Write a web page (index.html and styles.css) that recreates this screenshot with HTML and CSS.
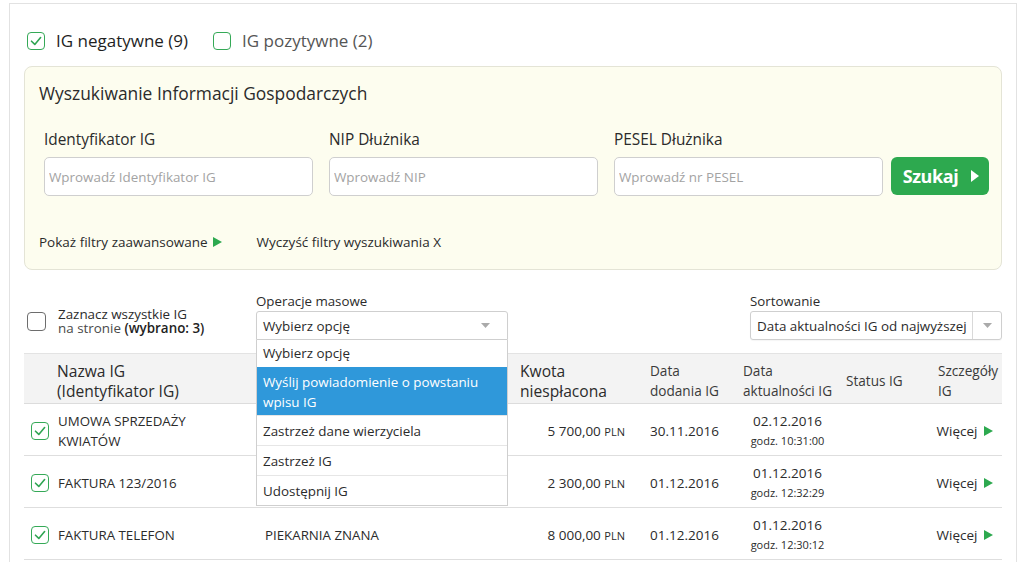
FILE: index.html
```html
<!DOCTYPE html>
<html lang="pl">
<head>
<meta charset="utf-8">
<title>Informacje Gospodarcze</title>
<link rel="stylesheet" href="styles.css">
</head>
<body>
<div class="page">
  <div class="type-filters">
    <label class="type-opt type-opt--active">
      <span class="cb cb--green"><svg viewBox="0 0 18 18" width="18" height="18"><polyline points="4.5,9.2 7.8,12.4 13.6,5.6" fill="none" stroke="#2fa552" stroke-width="1.6" stroke-linecap="round" stroke-linejoin="round"/></svg></span>
      IG negatywne (9)
    </label>
    <label class="type-opt">
      <span class="cb cb--green"></span>
      IG pozytywne (2)
    </label>
  </div>

  <section class="search-panel">
    <h2 class="panel-title">Wyszukiwanie Informacji Gospodarczych</h2>
    <div class="fields">
      <div class="field">
        <label class="field-label">Identyfikator IG</label>
        <input class="field-input" type="text" placeholder="Wprowadź Identyfikator IG">
      </div>
      <div class="field">
        <label class="field-label">NIP Dłużnika</label>
        <input class="field-input" type="text" placeholder="Wprowadź NIP">
      </div>
      <div class="field">
        <label class="field-label">PESEL Dłużnika</label>
        <input class="field-input" type="text" placeholder="Wprowadź nr PESEL">
      </div>
      <button class="btn-search" type="button">Szukaj <svg class="btn-tri" viewBox="0 0 8 12" width="8" height="12"><polygon points="0,0 8,6 0,12" fill="#fff"/></svg></button>
    </div>
    <div class="filter-links">
      <a class="filter-link">Pokaż filtry zaawansowane <svg class="tri" viewBox="0 0 9 10" width="9" height="10"><polygon points="0,0 9,5 0,10" fill="#2da94f"/></svg></a>
      <a class="filter-link">Wyczyść filtry wyszukiwania X</a>
    </div>
  </section>

  <div class="toolbar">
    <div class="select-all">
      <span class="cb cb--grey"></span>
      <div class="select-all-text"><div>Zaznacz wszystkie IG</div><div><span class="muted">na stronie</span> <b>(wybrano: 3)</b></div></div>
    </div>
    <div class="ops">
      <div class="tool-label">Operacje masowe</div>
      <div class="select select--open">
        <span class="select-value">Wybierz opcję</span>
        <span class="select-arrow select-arrow--wide"><svg viewBox="0 0 9 5" width="9" height="5"><polygon points="0,0 9,0 4.5,5" fill="#aaa"/></svg></span>
      </div>
      <ul class="dropdown">
        <li class="dropdown-item dropdown-item--first">Wybierz opcję</li>
        <li class="dropdown-item dropdown-item--hl">Wyślij powiadomienie o powstaniu wpisu IG</li>
        <li class="dropdown-item">Zastrzeż dane wierzyciela</li>
        <li class="dropdown-item">Zastrzeż IG</li>
        <li class="dropdown-item dropdown-item--last">Udostępnij IG</li>
      </ul>
    </div>
    <div class="sort">
      <div class="tool-label">Sortowanie</div>
      <div class="select">
        <span class="select-value">Data aktualności IG od najwyższej</span>
        <span class="select-arrow select-arrow--div"><svg viewBox="0 0 9 5" width="9" height="5"><polygon points="0,0 9,0 4.5,5" fill="#aaa"/></svg></span>
      </div>
    </div>
  </div>

  <table class="ig-table">
    <colgroup>
      <col class="c1"><col class="c2"><col class="c3"><col class="c4"><col class="c5"><col class="c6"><col class="c7">
    </colgroup>
    <thead>
      <tr>
        <th class="th-name th-big">Nazwa IG<br>(Identyfikator IG)</th>
        <th class="th-big"></th>
        <th class="th-big">Kwota<br>niespłacona</th>
        <th>Data<br>dodania IG</th>
        <th>Data<br>aktualności IG</th>
        <th>Status IG</th>
        <th>Szczegóły<br>IG</th>
      </tr>
    </thead>
    <tbody>
      <tr>
        <td class="td-name"><div class="name-wrap"><span class="cb cb--green"><svg viewBox="0 0 18 18" width="18" height="18"><polyline points="4.5,9.2 7.8,12.4 13.6,5.6" fill="none" stroke="#2fa552" stroke-width="1.6" stroke-linecap="round" stroke-linejoin="round"/></svg></span><span>UMOWA SPRZEDAŻY<br>KWIATÓW</span></div></td>
        <td class="td-cred"></td>
        <td class="td-amount">5 700,00 <small>PLN</small></td>
        <td class="td-date">30.11.2016</td>
        <td class="td-upd">02.12.2016<small>godz. 10:31:00</small></td>
        <td></td>
        <td class="td-more">Więcej <svg class="tri" viewBox="0 0 9 10" width="9" height="10"><polygon points="0,0 9,5 0,10" fill="#2da94f"/></svg></td>
      </tr>
      <tr>
        <td class="td-name"><div class="name-wrap"><span class="cb cb--green"><svg viewBox="0 0 18 18" width="18" height="18"><polyline points="4.5,9.2 7.8,12.4 13.6,5.6" fill="none" stroke="#2fa552" stroke-width="1.6" stroke-linecap="round" stroke-linejoin="round"/></svg></span><span>FAKTURA 123/2016</span></div></td>
        <td class="td-cred"></td>
        <td class="td-amount">2 300,00 <small>PLN</small></td>
        <td class="td-date">01.12.2016</td>
        <td class="td-upd">01.12.2016<small>godz. 12:32:29</small></td>
        <td></td>
        <td class="td-more">Więcej <svg class="tri" viewBox="0 0 9 10" width="9" height="10"><polygon points="0,0 9,5 0,10" fill="#2da94f"/></svg></td>
      </tr>
      <tr>
        <td class="td-name"><div class="name-wrap"><span class="cb cb--green"><svg viewBox="0 0 18 18" width="18" height="18"><polyline points="4.5,9.2 7.8,12.4 13.6,5.6" fill="none" stroke="#2fa552" stroke-width="1.6" stroke-linecap="round" stroke-linejoin="round"/></svg></span><span>FAKTURA TELEFON</span></div></td>
        <td class="td-cred">PIEKARNIA ZNANA</td>
        <td class="td-amount">8 000,00 <small>PLN</small></td>
        <td class="td-date">01.12.2016</td>
        <td class="td-upd">01.12.2016<small>godz. 12:30:12</small></td>
        <td></td>
        <td class="td-more">Więcej <svg class="tri" viewBox="0 0 9 10" width="9" height="10"><polygon points="0,0 9,5 0,10" fill="#2da94f"/></svg></td>
      </tr>
    </tbody>
  </table>
</div>
</body>
</html>
```

FILE: styles.css
```css
* { box-sizing: border-box; }
html, body { margin: 0; padding: 0; background: #fff; }
body {
  font-family: "Open Sans", "Liberation Sans", sans-serif;
  color: #2b2b2b;
  overflow: hidden;
}

.page {
  margin: 3px 0 0 9px;
  width: 1008px;
  border: 1px solid #e2e2e2;
  border-bottom: none;
  padding: 27px 14px 0 14px;
  min-height: 600px;
}

/* checkboxes */
.cb {
  display: inline-block;
  flex: none;
  width: 18px;
  height: 18px;
  border-radius: 4px;
  background: #fff;
}
.cb svg { display: block; }
.cb--green { border: 1.5px solid #35a957; }
.cb--green svg { margin: -1.5px; }
.cb--grey { border: 1.5px solid #6d6d6d; width: 19px; height: 19px; }

/* type filters */
.type-filters {
  display: flex;
  gap: 25px;
  height: 20px;
  align-items: center;
  padding-left: 3px;
}
.type-opt {
  display: flex;
  align-items: center;
  gap: 11px;
  font-size: 17px;
  line-height: 20px;
  color: #555;
}
.type-opt--active { color: #1f1f1f; }

/* search panel */
.search-panel {
  margin-top: 15px;
  background: #fdfdef;
  border: 1px solid #e4e4d6;
  border-radius: 8px;
  padding: 14px 12px 18px 14px;
}
.panel-title {
  margin: 0;
  font-size: 17.4px;
  line-height: 24px;
  font-weight: normal;
  color: #2b2b2b;
}
.fields {
  margin: 25px 0 0 5px;
  display: flex;
  align-items: flex-end;
  gap: 16px;
}
.field { flex: none; display: flex; flex-direction: column; width: 269px; }
.field-label {
  font-size: 15.4px;
  line-height: 20px;
  margin-bottom: 7px;
  color: #2b2b2b;
}
.field-input {
  height: 39px;
  width: 100%;
  border: 1px solid #cfcfcf;
  border-radius: 5px;
  background: #fff;
  padding: 0 4px;
  font-family: inherit;
  font-size: 13.4px;
  color: #333;
  outline: none;
}
.field-input::placeholder { color: #a3a3a3; }
.btn-search {
  flex: none;
  margin-left: -8px;
  margin-bottom: 1px;
  width: 98px;
  height: 38px;
  border: none;
  border-radius: 6px;
  background: #2da94f;
  color: #fff;
  font-family: inherit;
  font-weight: bold;
  font-size: 18px;
  letter-spacing: -0.4px;
  display: flex;
  align-items: center;
  justify-content: center;
  gap: 13px;
  padding: 0 0 1px 2px;
}
.btn-tri { display: block; }

.filter-links {
  margin-top: 37px;
  display: flex;
  gap: 35px;
  font-size: 13.5px;
  line-height: 18px;
}
.filter-link { color: #2b2b2b; text-decoration: none; display: inline-flex; align-items: center; gap: 5px; }
.tri { display: inline-block; }

/* toolbar */
.toolbar {
  margin-top: 23px;
  display: flex;
  align-items: flex-end;
}
.select-all {
  width: 232px;
  display: flex;
  align-items: center;
  gap: 12px;
  padding-left: 3px;
  margin-bottom: 5px;
}
.select-all-text {
  font-size: 13.4px;
  line-height: 14px;
  color: #2b2b2b;
}
.select-all-text .muted { color: #4a4a4a; }
.select-all-text b { font-weight: 600; color: #1f1f1f; }

.ops { width: 252px; position: relative; }
.sort { width: 252px; margin-left: auto; }
.tool-label {
  font-size: 13.3px;
  line-height: 17px;
  margin-bottom: 1px;
  color: #2b2b2b;
}
.select {
  height: 29px;
  border: 1px solid #cfcfcf;
  border-radius: 3px;
  background: #fff;
  display: flex;
  align-items: center;
  box-shadow: 0 1px 1px rgba(0,0,0,0.04);
}
.select--open { border-radius: 3px 3px 0 0; }
.select-value {
  flex: 1;
  padding-left: 6px;
  font-size: 13.4px;
  white-space: nowrap;
  color: #2b2b2b;
}
.select-arrow {
  flex: none;
  width: 29px;
  height: 100%;
  display: flex;
  align-items: center;
  justify-content: center;
}
.select-arrow--wide { width: 44px; }
.select-arrow--div { border-left: 1px solid #d9d9d9; }
.select-arrow svg { display: block; }

.dropdown {
  position: absolute;
  left: 0;
  top: 100%;
  width: 252px;
  margin: 0;
  padding: 0;
  list-style: none;
  background: #fff;
  border: 1px solid #cfcfcf;
  border-top: none;
  z-index: 10;
}
.dropdown-item {
  font-size: 13.4px;
  line-height: 20px;
  padding: 5px 6px 4px 6px;
  border-bottom: 1px solid #e6e6e6;
  color: #2b2b2b;
}
.dropdown-item--first { padding: 3px 6px 4px 6px; border-bottom: none; }
.dropdown-item--hl {
  background: #2f98da;
  color: #fff;
  padding: 5px 6px 3px 6px;
}
.dropdown-item--last { border-bottom: none; }

/* table */
.ig-table {
  margin-top: 13px;
  width: 978px;
  table-layout: fixed;
  border-collapse: separate;
  border-spacing: 0;
}
.c1 { width: 233px; }
.c2 { width: 253px; }
.c3 { width: 130px; }
.c4 { width: 93px; }
.c5 { width: 103px; }
.c6 { width: 92px; }
.c7 { width: 74px; }

.ig-table th {
  background: #f3f3f3;
  border-top: 1px solid #e3e3e3;
  border-bottom: 1px solid #dcdcdc;
  font-weight: normal;
  text-align: left;
  font-size: 13.6px;
  line-height: 20px;
  padding: 7px 4px 2px 10px;
  color: #3a3a3a;
  vertical-align: middle;
  white-space: nowrap;
}
.ig-table th.th-big { font-size: 15.6px; color: #2b2b2b; }
.ig-table th.th-name { padding-left: 33px; }

.ig-table td {
  border-bottom: 1px solid #dedede;
  padding: 7px 0 4px 0;
  font-size: 13.3px;
  line-height: 20px;
  vertical-align: middle;
  color: #2b2b2b;
  white-space: nowrap;
}
.ig-table td.td-name { padding-left: 7px; }
.name-wrap { display: flex; align-items: center; gap: 9px; }
.ig-table td.td-cred { padding-left: 8px; }
.ig-table td.td-amount { text-align: right; padding-right: 15px; font-size: 13.5px; }
.td-amount small { font-size: 11px; }
.ig-table td.td-date { padding-left: 10px; font-size: 13.5px; }
.ig-table td.td-upd { text-align: center; padding-left: 6px; font-size: 13.5px; }
.td-upd small { display: block; font-size: 11px; line-height: 20px; }
.ig-table td.td-more { text-align: right; padding-right: 9px; font-size: 13.5px; }
.td-more .tri { margin-left: 3px; }
```
